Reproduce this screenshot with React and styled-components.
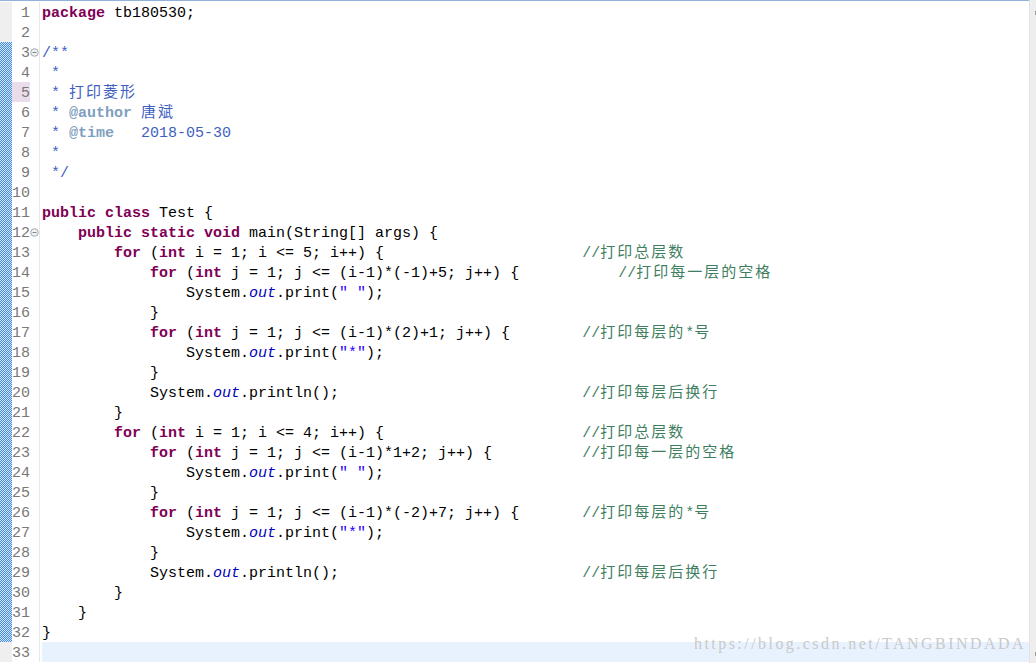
import React from "react";
import styled, { createGlobalStyle } from "styled-components";

const GlobalStyle = createGlobalStyle`
  html, body {
    margin: 0;
    padding: 0;
    background: #ffffff;
    overflow: hidden;
  }
`;

// [type, text] tokens: k keyword, p plain, s string, f static field, d javadoc, t javadoc tag
const LINES = [
  { t: [["k", "package"], ["p", " tb180530;"]] },
  { t: [] },
  { t: [["d", "/**"]], fold: true, range: true },
  { t: [["d", " *"]], range: true },
  { t: [["d", " * 打印菱形"]], range: true, marked: true },
  { t: [["d", " * "], ["t", "@author"], ["d", " 唐斌"]], range: true },
  { t: [["d", " * "], ["t", "@time"], ["d", "   2018-05-30"]], range: true },
  { t: [["d", " *"]], range: true },
  { t: [["d", " */"]], range: true },
  { t: [], range: true },
  { t: [["k", "public"], ["p", " "], ["k", "class"], ["p", " Test {"]], range: true },
  {
    t: [["p", "    "], ["k", "public"], ["p", " "], ["k", "static"], ["p", " "], ["k", "void"], ["p", " main(String[] args) {"]],
    fold: true,
    range: true,
  },
  { t: [["p", "        "], ["k", "for"], ["p", " ("], ["k", "int"], ["p", " i = 1; i <= 5; i++) {"]], c: [60, "//打印总层数"], range: true },
  { t: [["p", "            "], ["k", "for"], ["p", " ("], ["k", "int"], ["p", " j = 1; j <= (i-1)*(-1)+5; j++) {"]], c: [64, "//打印每一层的空格"], range: true },
  { t: [["p", "                System."], ["f", "out"], ["p", ".print("], ["s", '" "'], ["p", ");"]], range: true },
  { t: [["p", "            }"]], range: true },
  { t: [["p", "            "], ["k", "for"], ["p", " ("], ["k", "int"], ["p", " j = 1; j <= (i-1)*(2)+1; j++) {"]], c: [60, "//打印每层的*号"], range: true },
  { t: [["p", "                System."], ["f", "out"], ["p", ".print("], ["s", '"*"'], ["p", ");"]], range: true },
  { t: [["p", "            }"]], range: true },
  { t: [["p", "            System."], ["f", "out"], ["p", ".println();"]], c: [60, "//打印每层后换行"], range: true },
  { t: [["p", "        }"]], range: true },
  { t: [["p", "        "], ["k", "for"], ["p", " ("], ["k", "int"], ["p", " i = 1; i <= 4; i++) {"]], c: [60, "//打印总层数"], range: true },
  { t: [["p", "            "], ["k", "for"], ["p", " ("], ["k", "int"], ["p", " j = 1; j <= (i-1)*1+2; j++) {"]], c: [60, "//打印每一层的空格"], range: true },
  { t: [["p", "                System."], ["f", "out"], ["p", ".print("], ["s", '" "'], ["p", ");"]], range: true },
  { t: [["p", "            }"]], range: true },
  { t: [["p", "            "], ["k", "for"], ["p", " ("], ["k", "int"], ["p", " j = 1; j <= (i-1)*(-2)+7; j++) {"]], c: [60, "//打印每层的*号"], range: true },
  { t: [["p", "                System."], ["f", "out"], ["p", ".print("], ["s", '"*"'], ["p", ");"]], range: true },
  { t: [["p", "            }"]], range: true },
  { t: [["p", "            System."], ["f", "out"], ["p", ".println();"]], c: [60, "//打印每层后换行"], range: true },
  { t: [["p", "        }"]], range: true },
  { t: [["p", "    }"]], range: true },
  { t: [["p", "}"]], range: true },
  { t: [], current: true },
];

const TOKEN_COLORS = {
  k: "#7f0055",
  p: "#000000",
  s: "#2a00ff",
  f: "#0000c0",
  d: "#3f5fbf",
  t: "#7f9fbf",
  c: "#3f7f5f",
};

function withCjk(text) {
  return text.split(/([\u4e00-\u9fff]+)/).map((part, i) =>
    /[\u4e00-\u9fff]/.test(part) ? <Cjk key={i}>{part}</Cjk> : part
  );
}

function FoldIcon() {
  return (
    <svg width="9" height="9" viewBox="0 0 9 9">
      <circle cx="4.5" cy="4.5" r="3.8" fill="#eef1f4" stroke="#a3a8ae" strokeWidth="1" />
      <line x1="2.6" y1="4.5" x2="6.4" y2="4.5" stroke="#7d838a" strokeWidth="1" />
    </svg>
  );
}

function CodeLine({ line }) {
  const used = line.t.reduce((n, [, text]) => n + text.length, 0);
  return (
    <>
      {line.t.map(([type, text], i) => (
        <Token key={i} $type={type}>
          {withCjk(text)}
        </Token>
      ))}
      {line.c && (
        <>
          {" ".repeat(Math.max(1, line.c[0] - used))}
          <Token $type="c">{withCjk(line.c[1])}</Token>
        </>
      )}
    </>
  );
}

export default function App() {
  return (
    <>
      <GlobalStyle />
      <Page>
        <Editor>
          {LINES.map((line, i) => (
            <Row key={i}>
              <Ruler $range={line.range} />
              <LineNo $marked={line.marked}>{i + 1}</LineNo>
              <Fold>{line.fold && <FoldIcon />}</Fold>
              <Code $current={line.current}>
                <CodeLine line={line} />
              </Code>
            </Row>
          ))}
        </Editor>
        <Overview>
          <Mark $top="11px" />
          <Mark $top="652px" />
        </Overview>
        <Watermark>https://blog.csdn.net/TANGBINDADA</Watermark>
      </Page>
    </>
  );
}

const Page = styled.div`
  position: relative;
  display: flex;
  width: 1036px;
  height: 663px;
  overflow: hidden;
  font-family: "Liberation Mono", "DejaVu Sans Mono", monospace;
  font-size: 15px;
`;

const Editor = styled.div`
  flex: 1;
  display: flex;
  flex-direction: column;
  border-top: 1px solid #8fb3d9;
  padding-top: 1px;
`;

const Row = styled.div`
  display: flex;
  height: 20px;
`;

const Ruler = styled.div`
  width: 12px;
  flex-shrink: 0;
  background-color: ${(p) => (p.$range ? "#d6e7fb" : "#efefef")};
  background-image: ${(p) =>
    p.$range
      ? "repeating-conic-gradient(#3f8ae2 0 25%, transparent 0 50%)"
      : "none"};
  background-size: 2px 2px;
`;

const LineNo = styled.div`
  width: 18px;
  flex-shrink: 0;
  box-sizing: border-box;
  padding-top: 4px;
  line-height: 16px;
  text-align: right;
  color: #787878;
  background: ${(p) => (p.$marked ? "#ebdcec" : "transparent")};
`;

const Fold = styled.div`
  width: 9px;
  flex-shrink: 0;
  display: flex;
  align-items: center;
  justify-content: center;
  border-right: 1px solid #e8e8e8;
`;

const Code = styled.div`
  flex: 1;
  box-sizing: border-box;
  margin-left: 2px;
  padding-top: 4px;
  line-height: 16px;
  white-space: pre;
  background: ${(p) => (p.$current ? "#e8f2fe" : "transparent")};
`;

const Token = styled.span`
  color: ${(p) => TOKEN_COLORS[p.$type]};
  font-weight: ${(p) => (p.$type === "k" || p.$type === "t" ? 700 : 400)};
  font-style: ${(p) => (p.$type === "f" ? "italic" : "normal")};
`;

const Cjk = styled.span`
  font-family: "Noto Sans CJK SC", sans-serif;
  font-weight: 400;
  font-size: 15px;
  line-height: 0;
  letter-spacing: 2px;
`;

const Overview = styled.div`
  position: relative;
  width: 6px;
  background: #eeeeee;
  border-left: 1px solid #e2e2e2;
`;

const Mark = styled.div`
  position: absolute;
  right: 0;
  top: ${(p) => p.$top};
  width: 1px;
  height: 4px;
  background: #9a9a9a;
`;

const Watermark = styled.div`
  position: absolute;
  right: 10px;
  bottom: 10px;
  font-family: "Liberation Serif", serif;
  font-size: 16px;
  letter-spacing: 2.45px;
  color: #c9c9c9;
  pointer-events: none;
`;
